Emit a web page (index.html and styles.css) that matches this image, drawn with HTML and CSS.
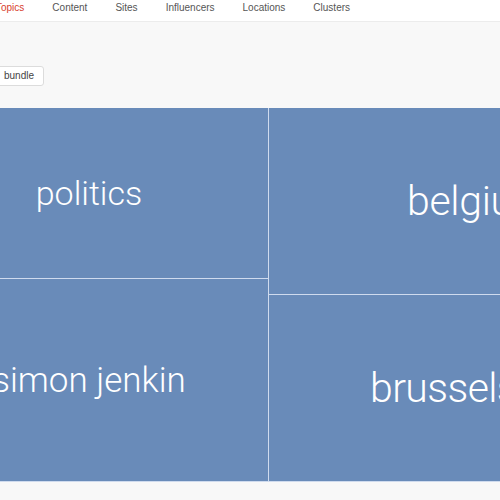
FILE: index.html
```html
<!DOCTYPE html>
<html>
<head>
<meta charset="utf-8">
<link rel="stylesheet" href="styles.css">
</head>
<body>
<nav class="topnav">
  <ul class="nav-list">
    <li class="nav-item active">Topics</li>
    <li class="nav-item">Content</li>
    <li class="nav-item">Sites</li>
    <li class="nav-item">Influencers</li>
    <li class="nav-item">Locations</li>
    <li class="nav-item">Clusters</li>
  </ul>
</nav>
<main class="main">
  <div class="toolbar">
    <button class="btn">bundle</button>
  </div>
  <div class="treemap">
    <div class="tm-col tm-col-left">
      <div class="tm-cell cell-politics"><span class="label label-politics">politics</span></div>
      <div class="tm-cell cell-simon"><span class="label label-simon">simon jenkin</span></div>
    </div>
    <div class="tm-col tm-col-right">
      <div class="tm-cell cell-belgium"><span class="label label-belgium">belgium</span></div>
      <div class="tm-cell cell-brussels"><span class="label label-brussels">brussels</span></div>
    </div>
  </div>
</main>
</body>
</html>
```
FILE: styles.css
```css
html, body {
  margin: 0;
  padding: 0;
  width: 500px;
  height: 500px;
  overflow: hidden;
  background: #f8f8f8;
  font-family: "Liberation Sans", Arial, sans-serif;
}
.topnav {
  height: 21px;
  background: #ffffff;
  border-bottom: 1px solid #ececec;
}
.nav-list {
  list-style: none;
  margin: 0 0 0 -18px;
  padding: 0;
  display: flex;
}
.nav-item {
  font-size: 10px;
  line-height: 15px;
  padding: 0 14px;
  color: #555555;
  white-space: nowrap;
}
.nav-item.active {
  color: #d8402e;
}
.main {
  background: #f8f8f8;
}
.toolbar {
  padding-top: 44px;
  height: 20px;
  display: flex;
}
.btn {
  margin: 0 0 0 -6px;
  height: 20px;
  padding: 0 9px 0 9px;
  border: 1px solid #dcdcdc;
  border-radius: 3px;
  background: #ffffff;
  font-family: "Liberation Sans", Arial, sans-serif;
  font-size: 10px;
  line-height: 18px;
  color: #444444;
}
.treemap {
  margin-top: 22px;
  margin-left: -90px;
  display: flex;
  gap: 1px;
  background: #cfdbee;
  height: 373px;
  border-bottom: 1px solid #cfdbee;
  width: 900px;
}
.tm-col {
  display: flex;
  flex-direction: column;
  gap: 1px;
}
.tm-col-left {
  width: 358px;
}
.tm-col-right {
  flex: 1;
}
.tm-cell {
  background: #698bb9;
  display: flex;
  align-items: center;
  color: #ffffff;
  font-family: Roboto, "Liberation Sans", sans-serif;
  font-weight: 300;
  white-space: nowrap;
}
.cell-politics { height: 170px; justify-content: center; }
.cell-simon { flex: 1; justify-content: center; }
.cell-belgium { height: 186px; padding-left: 138px; }
.cell-brussels { flex: 1; padding-left: 101px; }
.label-politics { font-size: 34px; }
.label-simon { font-size: 35px; }
.label-belgium { font-size: 41px; letter-spacing: -0.3px; }
.label-brussels { font-size: 41px; letter-spacing: -0.6px; }
```
